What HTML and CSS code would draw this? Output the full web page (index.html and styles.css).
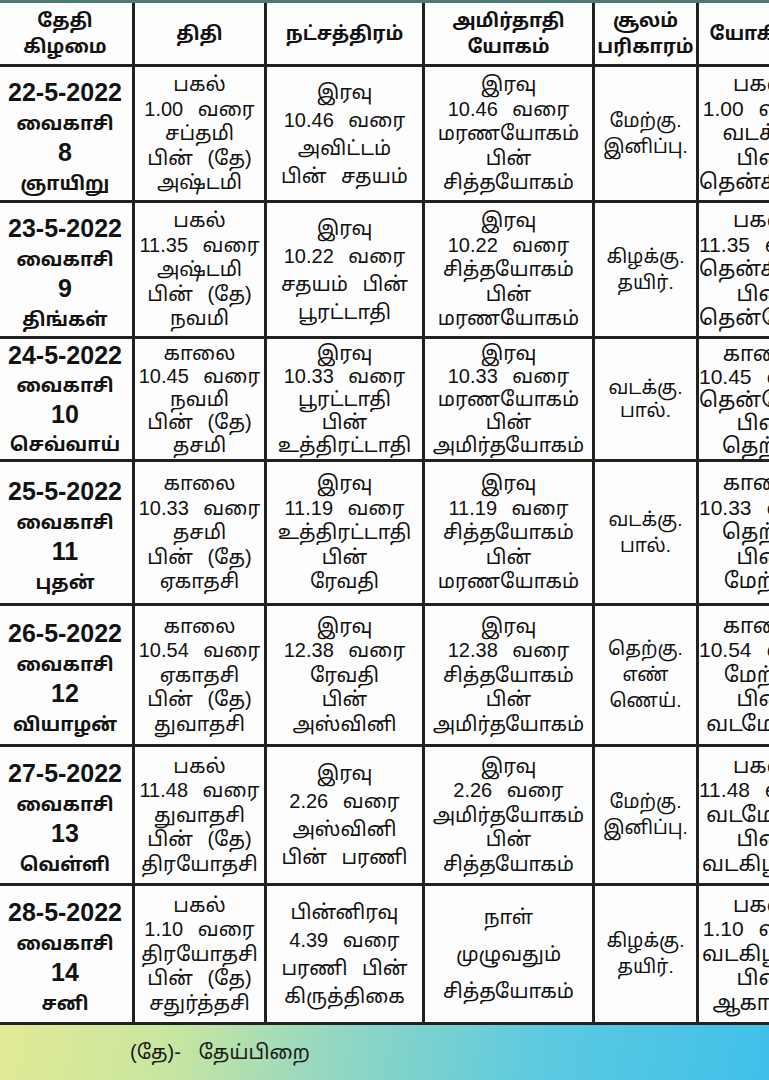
FILE: index.html
```html
<!DOCTYPE html>
<html lang="ta">
<head>
<meta charset="utf-8">
<title>வைகாசி பஞ்சாங்கம்</title>
<link rel="stylesheet" href="styles.css">
</head>
<body>
<div class="page">
  <table class="panchang">
    <colgroup>
      <col class="c-date"><col class="c-thithi"><col class="c-nak"><col class="c-amirtha"><col class="c-soolam"><col class="c-yogini">
    </colgroup>
    <thead>
      <tr>
        <th>தேதி<br>கிழமை</th>
        <th>திதி</th>
        <th>நட்சத்திரம்</th>
        <th>அமிர்தாதி<br>யோகம்</th>
        <th>சூலம்<br>பரிகாரம்</th>
        <th>யோகினி</th>
      </tr>
    </thead>
    <tbody>
      <tr>
        <td class="date"><span class="num">22-5-2022</span><br>வைகாசி<br><span class="num">8</span><br>ஞாயிறு</td>
        <td>பகல்<br>1.00 வரை<br>சப்தமி<br>பின் (தே)<br>அஷ்டமி</td>
        <td class="wide">இரவு<br>10.46 வரை<br>அவிட்டம்<br>பின் சதயம்</td>
        <td>இரவு<br>10.46 வரை<br>மரணயோகம்<br>பின்<br>சித்தயோகம்</td>
        <td class="small">மேற்கு.<br>இனிப்பு.</td>
        <td class="clip">பகல்<br>1.00 வரை<br>வடக்கு<br>பின்<br>தென்கிழக்கு</td>
      </tr>
      <tr>
        <td class="date"><span class="num">23-5-2022</span><br>வைகாசி<br><span class="num">9</span><br>திங்கள்</td>
        <td>பகல்<br>11.35 வரை<br>அஷ்டமி<br>பின் (தே)<br>நவமி</td>
        <td class="wide">இரவு<br>10.22 வரை<br>சதயம் பின்<br>பூரட்டாதி</td>
        <td>இரவு<br>10.22 வரை<br>சித்தயோகம்<br>பின்<br>மரணயோகம்</td>
        <td class="small">கிழக்கு.<br>தயிர்.</td>
        <td class="clip">பகல்<br>11.35 வரை<br>தென்கிழக்கு<br>பின்<br>தென்மேற்கு</td>
      </tr>
      <tr class="tight">
        <td class="date"><span class="num">24-5-2022</span><br>வைகாசி<br><span class="num">10</span><br>செவ்வாய்</td>
        <td>காலை<br>10.45 வரை<br>நவமி<br>பின் (தே)<br>தசமி</td>
        <td>இரவு<br>10.33 வரை<br>பூரட்டாதி<br>பின்<br>உத்திரட்டாதி</td>
        <td>இரவு<br>10.33 வரை<br>மரணயோகம்<br>பின்<br>அமிர்தயோகம்</td>
        <td class="small">வடக்கு.<br>பால்.</td>
        <td class="clip">காலை<br>10.45 வரை<br>தென்மேற்கு<br>பின்<br>தெற்கு</td>
      </tr>
      <tr>
        <td class="date"><span class="num">25-5-2022</span><br>வைகாசி<br><span class="num">11</span><br>புதன்</td>
        <td>காலை<br>10.33 வரை<br>தசமி<br>பின் (தே)<br>ஏகாதசி</td>
        <td>இரவு<br>11.19 வரை<br>உத்திரட்டாதி<br>பின்<br>ரேவதி</td>
        <td>இரவு<br>11.19 வரை<br>சித்தயோகம்<br>பின்<br>மரணயோகம்</td>
        <td class="small">வடக்கு.<br>பால்.</td>
        <td class="clip">காலை<br>10.33 வரை<br>தெற்கு<br>பின்<br>மேற்கு</td>
      </tr>
      <tr>
        <td class="date"><span class="num">26-5-2022</span><br>வைகாசி<br><span class="num">12</span><br>வியாழன்</td>
        <td>காலை<br>10.54 வரை<br>ஏகாதசி<br>பின் (தே)<br>துவாதசி</td>
        <td>இரவு<br>12.38 வரை<br>ரேவதி<br>பின்<br>அஸ்வினி</td>
        <td>இரவு<br>12.38 வரை<br>சித்தயோகம்<br>பின்<br>அமிர்தயோகம்</td>
        <td class="small">தெற்கு.<br>எண்<br>ணெய்.</td>
        <td class="clip">காலை<br>10.54 வரை<br>மேற்கு<br>பின்<br>வடமேற்கு</td>
      </tr>
      <tr>
        <td class="date"><span class="num">27-5-2022</span><br>வைகாசி<br><span class="num">13</span><br>வெள்ளி</td>
        <td>பகல்<br>11.48 வரை<br>துவாதசி<br>பின் (தே)<br>திரயோதசி</td>
        <td class="wide">இரவு<br>2.26 வரை<br>அஸ்வினி<br>பின் பரணி</td>
        <td>இரவு<br>2.26 வரை<br>அமிர்தயோகம்<br>பின்<br>சித்தயோகம்</td>
        <td class="small">மேற்கு.<br>இனிப்பு.</td>
        <td class="clip">பகல்<br>11.48 வரை<br>வடமேற்கு<br>பின்<br>வடகிழக்கு</td>
      </tr>
      <tr>
        <td class="date"><span class="num">28-5-2022</span><br>வைகாசி<br><span class="num">14</span><br>சனி</td>
        <td>பகல்<br>1.10 வரை<br>திரயோதசி<br>பின் (தே)<br>சதுர்த்தசி</td>
        <td class="wide">பின்னிரவு<br>4.39 வரை<br>பரணி பின்<br>கிருத்திகை</td>
        <td class="airy">நாள்<br>முழுவதும்<br>சித்தயோகம்</td>
        <td class="small">கிழக்கு.<br>தயிர்.</td>
        <td class="clip">பகல்<br>1.10 வரை<br>வடகிழக்கு<br>பின்<br>ஆகாயம்</td>
      </tr>
    </tbody>
  </table>
  <div class="legend">(தே)- தேய்பிறை</div>
</div>
</body>
</html>
```

FILE: styles.css
```css
html, body {
  margin: 0;
  padding: 0;
  background: #fdfdfd;
}

body {
  width: 769px;
  height: 1080px;
  overflow: hidden;
  font-family: "Liberation Sans", "Noto Sans Tamil", "Noto Sans", sans-serif;
  color: #121212;
}

.page {
  border-top: 3px solid #4d7a74;
  width: 769px;
  overflow: hidden;
}

.panchang {
  border-collapse: collapse;
  table-layout: fixed;
  width: 827px;
  margin-left: -5px;
}

.c-date { width: 137px; }
.c-thithi { width: 132px; }
.c-nak { width: 158px; }
.c-amirtha { width: 170px; }
.c-soolam { width: 104px; }
.c-yogini { width: 126px; }

.panchang th,
.panchang td {
  border: 3px solid #222;
  text-align: center;
  vertical-align: middle;
  padding: 0 1px;
  white-space: nowrap;
  overflow: hidden;
}

.panchang thead tr th {
  border-top: none;
}

.panchang th {
  height: 61px;
  font-size: 19px;
  line-height: 26px;
  font-weight: bold;
}

.panchang td {
  font-size: 20px;
  line-height: 24.5px;
  word-spacing: 9px;
}

.panchang tbody tr:nth-child(1) { height: 136px; }
.panchang tbody tr:nth-child(2) { height: 136px; }
.panchang tbody tr:nth-child(3) { height: 123px; }
.panchang tbody tr:nth-child(4) { height: 144px; }
.panchang tbody tr:nth-child(5) { height: 141px; }
.panchang tbody tr:nth-child(6) { height: 139px; }
.panchang tbody tr:nth-child(7) { height: 139px; }

.panchang tr.tight td {
  line-height: 23px;
}

.panchang td.date {
  font-weight: bold;
  font-size: 19px;
  line-height: 29px;
  word-spacing: 0;
  padding-top: 8px;
}

.panchang tr.tight td.date {
  padding-top: 2px;
  line-height: 28px;
}

.panchang td.date .num {
  font-size: 25px;
}

.panchang td.wide {
  line-height: 28px;
}

.panchang td.airy {
  line-height: 37px;
}

.panchang td.small {
  font-size: 19px;
  line-height: 26px;
}

.panchang td.clip {
  padding: 0;
  font-size: 21px;
}

.legend {
  height: 60px;
  padding-left: 130px;
  display: flex;
  align-items: center;
  padding-bottom: 4px;
  box-sizing: border-box;
  font-size: 20px;
  word-spacing: 12px;
  color: #1a1a1a;
  background: linear-gradient(100deg, #e2ea94 0%, #c9e6a0 22%, #8fd6c4 45%, #5ccae0 70%, #3fc0ea 100%);
}
```
